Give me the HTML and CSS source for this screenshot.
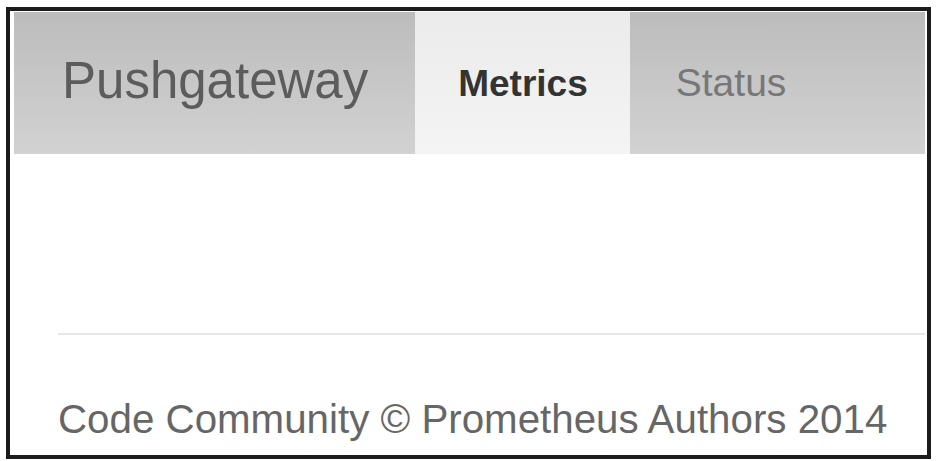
FILE: index.html
```html
<!DOCTYPE html>
<html lang="en">
<head>
    <meta charset="UTF-8">
    <meta name="viewport" content="width=device-width, initial-scale=1.0">
    <title>Pushgateway</title>
    <link rel="stylesheet" href="styles.css">
</head>
<body>

<div class="frame">
    <!-- Top navigation -->
    <nav class="navbar">
        <a class="brand" href="#">Pushgateway</a>
        <a class="nav-item active" href="#">Metrics</a>
        <a class="nav-item status" href="#">Status</a>
    </nav>

    <!-- Page body (empty) -->
    <div class="container">
        <hr class="divider">
        <footer class="footer">Code Community &copy; Prometheus Authors 2014</footer>
    </div>
</div>

</body>
</html>
```

FILE: styles.css
```css
body {
    margin: 0;
    padding: 0;
    background-color: #fff;
    font-family: "Liberation Sans", Arial, sans-serif;
}
.frame {
    box-sizing: border-box;
    width: 925px;
    height: 452px;
    margin: 7px 0 0 6px;
    padding: 1px 2px 0 4px;
    border: 4px solid #1b1b1b;
    overflow: hidden;
}
.navbar {
    display: flex;
    height: 142px;
    background: linear-gradient(to bottom, #bcbcbc, #d2d2d2);
}
.navbar a {
    box-sizing: border-box;
    height: 100%;
    line-height: 1;
    text-decoration: none;
}
.brand {
    padding: 43px 47px 0 48px;
    font-size: 51px;
    color: #5c5c5c;
}
.nav-item {
    font-size: 38px;
    color: #777;
}
.nav-item.active {
    padding: 53px 42px 0 43px;
    font-size: 37px;
    font-weight: bold;
    color: #333;
    background: linear-gradient(to bottom, #ebebeb, #f4f4f4);
}
.nav-item.status {
    padding: 51px 20px 0 46px;
    font-size: 39px;
}
.container {
    margin-left: 44px;
}
.divider {
    margin: 179px 0 0 0;
    border: none;
    border-top: 2px solid #e6e6e6;
}
.footer {
    margin-top: 65px;
    font-size: 40.3px;
    line-height: 1;
    color: #666;
}
```
